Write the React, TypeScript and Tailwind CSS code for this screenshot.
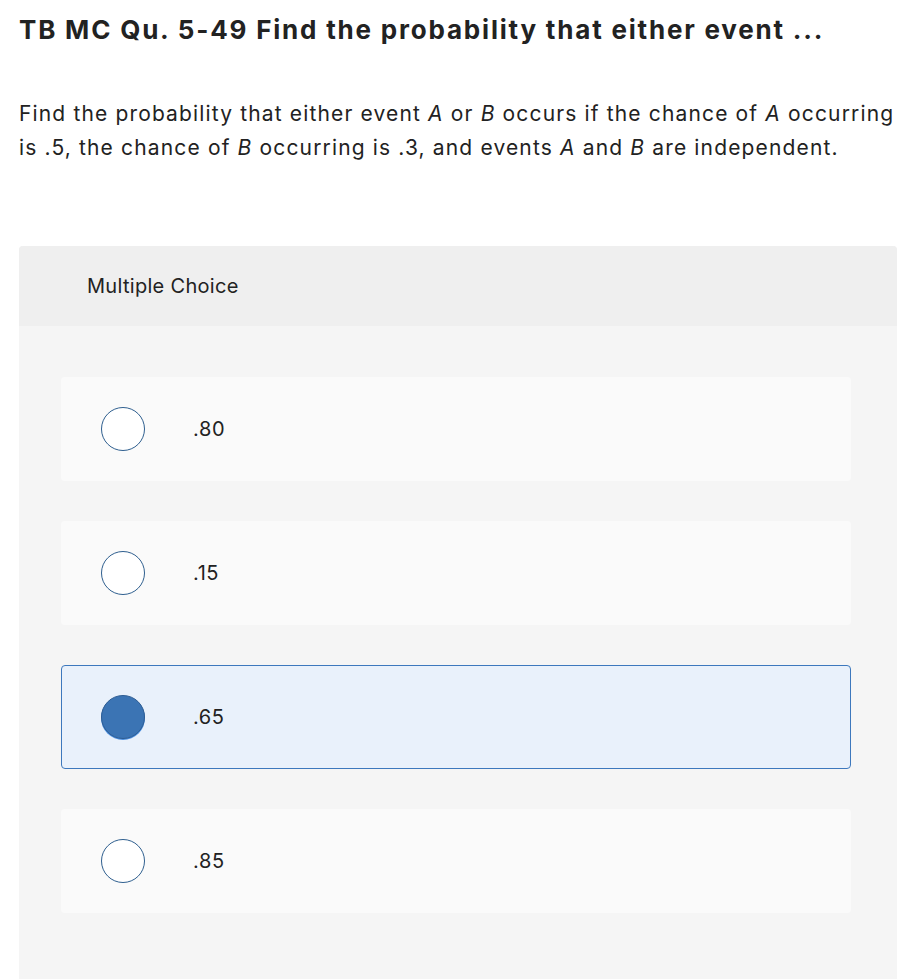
import { useState } from "react";

const options = [".80", ".15", ".65", ".85"];

export default function App() {
  const [selected, setSelected] = useState(2);

  return (
    <div
      className="min-h-[979px] bg-white text-[#222222]"
      style={{ fontFamily: "'Inter', 'Liberation Sans', sans-serif" }}
    >
      <div className="px-[19px] pt-[12px]">
        <h1 className="text-[26px] font-bold leading-[36px] tracking-[1.8px] whitespace-nowrap">
          TB MC Qu. 5-49 Find the probability that either event ...
        </h1>
        <p className="mt-[49px] text-[21px] leading-[34px] tracking-[1.15px] whitespace-nowrap">
          Find the probability that either event <i>A</i> or <i>B</i> occurs if the chance of <i>A</i> occurring
          <br />
          is .5, the chance of <i>B</i> occurring is .3, and events <i>A</i> and <i>B</i> are independent.
        </p>
      </div>

      {/* Bloco de múltipla escolha */}
      <div className="mt-[81px] ml-[19px] mr-[4px] rounded-t-[4px] bg-[#f5f5f5] min-h-[733px]">
        <div className="h-[80px] flex items-center pl-[68px] bg-[#efefef] rounded-t-[4px]">
          <span className="text-[20px] tracking-[0.3px]">Multiple Choice</span>
        </div>
        <div className="pt-[51px] pl-[42px] pr-[46px] flex flex-col gap-[40px]">
          {options.map((opt, i) => {
            const active = i === selected;
            return (
              <button
                key={opt}
                onClick={() => setSelected(i)}
                className={`h-[104px] flex items-center pl-[39px] rounded-[4px] text-left ${
                  active
                    ? "bg-[#e9f1fb] border border-[#3d78bd]"
                    : "bg-[#fafafa] border border-transparent"
                }`}
              >
                <span
                  className={`w-[44px] h-[44px] rounded-full shrink-0 ${
                    active
                      ? "bg-[#3b74b4] border border-[#2e5d93] shadow-[0_1px_0_#4a8fe0]"
                      : "bg-white border-[1.5px] border-[#2f5f8f]"
                  }`}
                />
                <span className="ml-[48px] text-[20px] tracking-[0.6px]">{opt}</span>
              </button>
            );
          })}
        </div>
      </div>
    </div>
  );
}
